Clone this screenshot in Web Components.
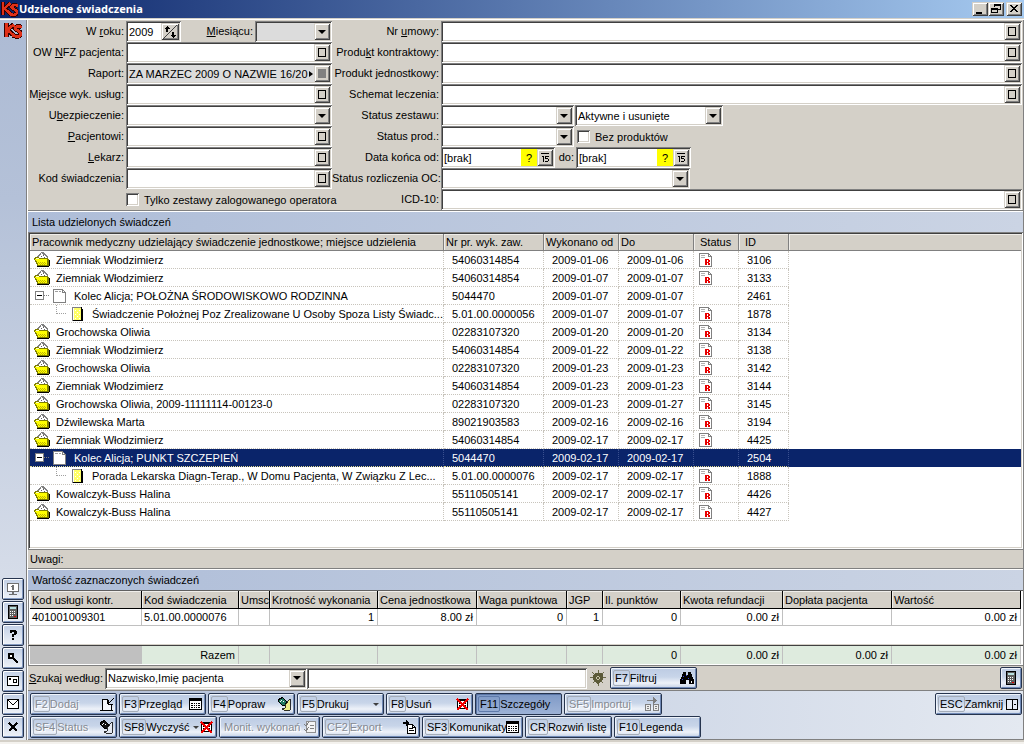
<!DOCTYPE html>
<html lang="pl">
<head>
<meta charset="utf-8">
<title>Udzielone świadczenia</title>
<style>
  html, body { margin: 0; height: 100%; }
  body { font: 11px/14px "Liberation Sans", Arial, sans-serif; color: #000; background: #d4d0c8; }
</style>
</head>
<body>
<ks-window></ks-window>

<script>
const ICONS = {
  logo: '<g fill="none" stroke="#300" stroke-width="4"><path d="M2 1V13M9 2L3 7L10 13M16 5C14 3 9 4 10 6S16 8 15 11 10 13 8 12"/></g><g fill="none" stroke="#e03018" stroke-width="2.4"><path d="M2 1V13M9 2L3 7L10 13M16 5C14 3 9 4 10 6S16 8 15 11 10 13 8 12"/></g>',
  min: '<path fill="#000" d="M4 11h6v2H4z"/>',
  restore: '<path fill="none" stroke="#000" d="M6.500 6V3.500h6v5H10M3.500 7.500h6v4h-6z"/><path fill="#000" d="M6 3h7v2H6zM3 7h7v2H3z"/>',
  close: '<path fill="#000" d="M4 4h2v1h1v1h2V5h1V4h2v1h-1v1h-1v1H9v1h1v1h1v1h1v1h-2v-1H9V9H7v1H6v1H4v-1h1V9h1V8h1V7H6V6H5V5H4z"/>',
  folder: '<path fill="#808080" d="M7 0h3v1h1v1h1v1h1v1h1v4H3V4h1V3h1V2h1V1h1z"/><path fill="#fff" d="M7 1h1v1h1v1h2v1h1v1h1v3H4V5h1V4h1V3h1z"/><path fill="#606060" d="M9 3h1v1H9zM7 4h1v1H7zM10 5h1v1h-1z"/><path fill="#808000" d="M1 5h4v1h9v1h1v7H3v-2H2v-2H1V8H0V6h1z"/><path fill="#ffff00" d="M1 7h12v6H4v-2H3V9H2V8H1z"/><path fill="#ffffc0" d="M2 6h3v1H2z"/><path fill="#c0b800" d="M4 10h1v1H4zM6 10h1v1H6zM8 10h1v1H8zM10 10h1v1h-1zM5 11h1v1H5zM7 11h1v1H7zM9 11h1v1H9zM11 11h1v1h-1zM6 12h1v1H6zM8 12h1v1H8zM10 12h1v1h-1z"/><path fill="#000" d="M3 14h12v1H3zM15 8h1v6h-1z"/>',
  page: '<path fill="#fff" stroke="#808080" d="M1.500 1.500h9l3 3v10h-12z"/><path fill="none" stroke="#808080" d="M10.500 1.500v3h3"/><path fill="#a0a0a0" d="M3 3h3v1H3zM7 3h2v1H7z"/>',
  note: '<path fill="#ffff66" stroke="#808080" d="M1.500 1.500h9v13h-9z"/><path fill="#fff" d="M2 2h1v12H2zM4 4h1v1H4zM6 6h1v1H6zM8 4h1v1H8zM4 8h1v1H4zM8 8h1v1H8zM6 10h1v1H6zM4 12h1v1H4zM8 12h1v1H8z"/><path fill="#000" d="M10 1h1v2h1v12H2v-1h8z"/>',
  report: '<path fill="#fff" stroke="#808080" d="M1.500 1.500h9l3 3v10h-12z"/><path fill="none" stroke="#808080" d="M10.500 1.500v3h3"/><path fill="#b0b0b0" d="M3 3h4v1H3zM3 5h4v1H3z"/><path fill="#e80000" fill-rule="evenodd" d="M7 7h4v1h1v2h-1v1h1v2h-2v-2H9v2H7zM9 8v2h1V8z"/>',
  monitor: '<path fill="#fff" stroke="#707070" d="M2.500 2.500h11v8h-11z"/><path fill="#707070" d="M7 4h2v5H7zM6 5h1v1H6zM7 11h2v2H7zM4 13h8v1H4z"/>',
  calc: '<path fill="#606060" stroke="#000" d="M3.500 1.500h9v13h-9z"/><path fill="#b8e0e0" d="M5 3h6v2H5z"/><path fill="#fff" d="M5 7h1v1H5zM7 7h1v1H7zM9 7h1v1H9zM5 9h1v1H5zM7 9h1v1H7zM9 9h1v1H9zM5 11h1v1H5zM7 11h1v1H7z"/><path fill="#e00000" d="M9 12h2v1H9z"/>',
  help: '<path fill="#000" d="M5 3h6v1h1v3h-1v1H9v2H7V7h2V5H7v1H5zM7 11h2v2H7z"/>',
  lens: '<path fill="none" stroke="#000" stroke-width="2" d="M4 4h4v4H4zM9 9l4 4"/><path fill="#fff" d="M5 5h2v2H5z"/>',
  card: '<path fill="#fff" stroke="#000" d="M2.500 3.500h11v9h-11z"/><path fill="#000" d="M4 5h2v2H4z"/><path fill="none" stroke="#000" d="M8.500 6.500h3v3h-3z"/>',
  mail: '<path fill="#fff" stroke="#000" d="M2.500 3.500h11v9h-11z"/><path fill="none" stroke="#000" d="M3 4l5 5 5-5"/>',
  cross: '<path fill="none" stroke="#000" stroke-width="2" d="M4 4l8 8M12 4l-8 8"/>',
  add: '<path fill="#f4f6fa" stroke="#000" d="M7 3.500H3.500v11h9V9"/><path fill="none" stroke="#000" d="M3 3.500h5.500v4M15 2l-5 5M9.500 4v4H14M1 14.500h13"/>',
  table: '<path fill="#fff" stroke="#000" d="M1.500 2.500h12v11h-12z"/><path fill="#000" d="M2 3h11v2H2zM3 7h2v1H3zM6 7h1v1H6zM8 7h1v1H8zM10 7h2v1h-2zM3 9h2v1H3zM6 9h1v1H6zM8 9h1v1H8zM10 9h2v1h-2zM3 11h2v1H3zM6 11h1v1H6zM8 11h1v1H8zM10 11h2v1h-2z"/>',
  edit: '<path fill="#207860" stroke="#000" d="M1.500 3.500l4-2 4 4-1 4-3 0-4-4z"/><path fill="#eeee88" stroke="#000" stroke-width=".8" d="M8 9l5-6v11l-4 1-4-2 3-1z"/><path fill="#fff" d="M4 4h1v1H4zM6 5h1v1H6zM3 5h1v1H3z"/>',
  status: '<path fill="#111" stroke="#000" d="M1.500 3.500l4-2 4 4-1 4-3 0-4-4z"/><path fill="#e4e8f0" stroke="#000" stroke-width=".8" d="M8 9l5-6v11l-4 1-4-2 3-1z"/><path fill="#fff" d="M4 4h1v1H4zM6 5h1v1H6zM3 5h1v1H3z"/>',
  del: '<path fill="#fff" stroke="#000" d="M2.500 3.500h10v9h-10z"/><path fill="#000" d="M3 4h9v1H3zM4 7h7v1H4zM4 9h7v1H4z"/><path fill="none" stroke="#f00000" stroke-width="1.500" d="M2 3l11 11M13 3L2 14"/>',
  check: '<path fill="#f4f4f4" stroke="#909090" d="M4.500 2.500h9v11h-9z"/><path fill="none" stroke="#808080" d="M2 5l2 2 3-4M2 10l2 2 3-4M8 6.500h4M8 9.500h4"/>',
  export: '<path fill="#fff" stroke="#000" d="M5.500 5.500h5l3 3v6h-8z"/><path fill="none" stroke="#000" d="M7 9.500h4M7 11.500h5M10.500 5.500v3h3"/><path fill="#000" d="M1 3h3V1l4 3-4 3V5H1z"/>',
  import: '<path fill="#eee" stroke="#808080" d="M1.500 8.500h5v6h-5zM9.500 8.500h5v6h-5z"/><path fill="none" stroke="#808080" d="M3 10.500h2M3 12.500h2M11 10.500h2M11 12.500h2M3 4.500h9M9.500 2v5"/><path fill="#808080" d="M9 1l4 3.500L9 8z"/>',
  exit: '<path fill="#e6ecf6" stroke="#000" d="M2.500 3.500h11v10h-11zM8.500 3v11"/><path fill="#000" d="M10 8h2v1h-2z"/>',
  binoculars: '<path fill="#000" d="M4 2h3v3h2V2h3l1 4 2 4v4h-5v-4H7v4H1v-4l2-4z"/><path fill="#3040e0" d="M4 6h1v1H4zM3 9h1v1H3zM9 8h1v1H9zM7 5h1v1H7z"/><path fill="#fff" d="M12 11h1v2h-1z"/>',
  gear: '<path fill="none" stroke="#6a6848" stroke-width="1" d="M8 0v16M0 7.500h16M2 2l11 11M14 2L3 13"/><path fill="#5c5a38" d="M5 3h6l2 2v5l-3 2-2 3-2-3-3-2V5z"/><path fill="#c8c4a8" d="M7 6h2v1h1v2H9v1H7V9H6V7h1z"/><path fill="#5c5a38" d="M7 7h2v2H7z"/>',
  sort: '<path stroke="#404040" d="M1 15L15 1"/><path fill="#000" d="M5 2l3 3H6v3H4V5H2zM11 14l3-3h-2V8h-2v3H8z"/>',
  day: '<path fill="#000" d="M4 3h8v1H4zM5 6h2v6H6V7H5zM8 6h4v1H9v1h2v1H8zM11 9h1v2h-1zM8 11h3v1H8z"/>'
};
const icon = (name, size = 16) =>
  `<svg width="${size}" height="${size}" viewBox="0 0 16 16" shape-rendering="crispEdges" aria-hidden="true">${ICONS[name]}</svg>`;

const BASE = `
  *, *::before, *::after { box-sizing: border-box; }
  svg { display: block; flex: none; }
  button, input, select { font: inherit; color: inherit; margin: 0; border-radius: 0; }
  .sunken { padding: 2px; background: #fff;
    box-shadow: inset 1px 1px #808080, inset -1px -1px #fff, inset 2px 2px #404040, inset -2px -2px #d4d0c8; }
  .raised { border: 0; padding: 0; background: #d4d0c8; display: flex; align-items: center; justify-content: center;
    box-shadow: inset 1px 1px #d4d0c8, inset -1px -1px #404040, inset 2px 2px #fff, inset -2px -2px #808080; }
`;

/* Registers an element whose open shadow root is filled from a template string. */
function define(tag, css, view) {
  customElements.define(tag, class extends HTMLElement {
    connectedCallback() {
      if (this.shadowRoot) return;
      const t = document.createElement('template');
      t.innerHTML = `<style>${BASE}${css}</style>${view(this)}`;
      this.attachShadow({ mode: 'open' }).append(t.content.cloneNode(true));
    }
  });
}
const attr = (el, name, fallback = '') => el.getAttribute(name) ?? fallback;

/* Window caption with its three system buttons */
define('ks-titlebar', `
  :host { display: flex; align-items: center; height: 18px; padding: 0 2px 0 1px; color: #fff;
    background: linear-gradient(to right, #0a246a, #a6caf0); }
  h1 { flex: 1; margin: 0 0 0 1px; font: bold 11px/16px "Noto Sans", sans-serif; }
  .raised { width: 16px; height: 14px; color: #000; }
  .raised:last-child { margin-left: 2px; }
`, () => `${icon('logo', 17)}<h1><slot></slot></h1>
  <button class="raised" aria-label="Minimalizuj">${icon('min')}</button>
  <button class="raised" aria-label="Przywróć">${icon('restore')}</button>
  <button class="raised" aria-label="Zamknij">${icon('close')}</button>`);

/* Vertical tool strip on the left */
define('ks-rail', `
  :host { display: flex; flex-direction: column; align-items: center; width: 26px; padding: 2px 0 1px;
    background: linear-gradient(to bottom, #adbbd4, #b4c1d8 25%, #d4dbe8 75%, #e4e9f1); }
  .gap { flex: 1; }
  button { width: 22px; height: 22px; margin-bottom: 1px; padding: 0; display: flex; align-items: center; justify-content: center;
    border: 1px solid #26344e; border-radius: 2px; background: linear-gradient(#c2d0e6, #eef2f8);
    box-shadow: inset 1px 1px #fff, inset -1px -1px #8299c0; }
`, () => `${icon('logo', 18)}<span class="gap"></span>` +
  [['monitor', 'Ekran'], ['calc', 'Kalkulator'], ['help', 'Pomoc'], ['lens', 'Szukaj'], ['card', 'Karta'], ['mail', 'Wiadomości'], ['cross', 'Zamknij']]
    .map(([i, l]) => `<button aria-label="${l}">${icon(i)}</button>`).join(''));

/* Sunken box: text field, lookup field, date field, spinner or drop-down */
function control(el) {
  const type = attr(el, 'type', 'lookup'), value = attr(el, 'value'), off = el.hasAttribute('inactive') ? ' off' : '';
  const name = el.hasAttribute('tip') ? ` aria-label="${attr(el, 'tip')}"` : '';
  if (type === 'select')
    return `<div class="box sunken${off}"><select id="c"${name}><option>${value}</option></select><span class="raised arrow"><i></i></span></div>`;
  const input = `<input id="c" type="text" value="${value}"${name}>`;
  if (type === 'date')
    return `<div class="box sunken">${input}<button class="ask" aria-label="Wybierz">?</button><button class="raised" aria-label="Kalendarz">${icon('day')}</button></div>`;
  if (type === 'spin')
    return `<div class="box sunken">${input}<button class="raised wide" aria-label="Zmień rok">${icon('sort')}</button></div>`;
  if (type === 'text') return `<div class="box sunken">${input}</div>`;
  return `<div class="box sunken${off}">${input}${off ? '<span class="more"></span>' : ''}<button class="raised" aria-label="Wybierz z listy"><b></b></button></div>`;
}
define('ks-field', `
  :host { display: flex; align-items: stretch; height: 21px; min-width: 0; }
  label { width: var(--label, auto); flex: none; padding-right: 2px; text-align: right; line-height: 20px; white-space: nowrap; }
  .box { flex: 1; min-width: 0; display: flex; }
  .off { background: #dcdcdc; }
  input, select { flex: 1; width: 0; min-width: 0; border: 0; padding: 0 1px; background: transparent; appearance: none; outline: 0; }
  .box:has(select) { display: grid; grid-template-columns: 1fr 16px; }
  select { width: 100%; grid-area: 1 / 1 / 2 / 3; padding-right: 18px; }
  .arrow { grid-area: 1 / 2; pointer-events: none; }
  .arrow i { border: 4px solid transparent; border-top-color: #000; border-bottom: 0; }
  .raised { width: 16px; flex: none; }
  .wide { width: 18px; }
  .raised b { width: 8px; height: 9px; border: 1px solid #000; }
  .off .raised b { border: 0; background: #808080; }
  .more { align-self: center; margin-right: 1px; border: 3px solid transparent; border-left: 4px solid #000; border-right: 0; }
  .ask { width: 16px; flex: none; border: 0; padding: 0; background: #ff0; }
`, el => (el.hasAttribute('tip') ? '' : '<label for="c"><slot></slot></label>') + control(el));

define('ks-check', `
  :host { display: flex; align-items: center; height: 21px; }
  label { display: flex; align-items: center; gap: 5px; white-space: nowrap; }
  input { appearance: none; width: 13px; height: 13px; background: #fff;
    box-shadow: inset 1px 1px #808080, inset -1px -1px #fff, inset 2px 2px #404040, inset -2px -2px #d4d0c8; }
`, () => `<label><input type="checkbox"><slot></slot></label>`);

/* Search criteria above the list */
define('ks-filters', `
  :host { display: grid; grid-template-columns: 304px 1fr; padding: 1px 1px 0 0; border-bottom: 1px solid #808080; }
  .col { display: flex; flex-direction: column; min-width: 0; }
  .left { --label: 98px; }
  .right { --label: 109px; }
  .row { display: flex; gap: 1px; }
  .year { width: 153px; }
  .month { flex: 1; --label: 73px; }
  .w1 { width: 242px; }
  .w2 { width: 148px; }
  .w3 { width: 223px; }
  .w4 { width: 358px; }
  .to { width: 135px; --label: 20px; }
  .in { margin-left: 98px; }
  .no { margin-left: 2px; }
`, () => `
  <div class="col left">
    <div class="row"><ks-field class="year" type="spin" value="2009">W <u>r</u>oku:</ks-field><ks-field class="month" type="select" inactive><u>M</u>iesiącu:</ks-field></div>
    <ks-field>OW <u>N</u>FZ pacjenta:</ks-field>
    <ks-field inactive value="ZA MARZEC 2009 O NAZWIE 16/20">Raport:</ks-field>
    <ks-field>M<u>i</u>ejsce wyk. usług:</ks-field>
    <ks-field type="select">U<u>b</u>ezpieczenie:</ks-field>
    <ks-field><u>P</u>acjentowi:</ks-field>
    <ks-field><u>L</u>ekarz:</ks-field>
    <ks-field>Kod świadczenia:</ks-field>
    <ks-check class="in">Tylko zestawy zalogowanego operatora</ks-check>
  </div>
  <div class="col right">
    <ks-field>Nr <u>u</u>mowy:</ks-field>
    <ks-field>Produ<u>k</u>t kontraktowy:</ks-field>
    <ks-field>Produkt jednostkowy:</ks-field>
    <ks-field>Schemat leczenia:</ks-field>
    <div class="row"><ks-field class="w1" type="select">Status zestawu:</ks-field><ks-field class="w2" type="select" value="Aktywne i usunięte" tip="Zakres zestawów"></ks-field></div>
    <div class="row"><ks-field class="w1" type="select">Status prod.:</ks-field><ks-check class="no">Bez produktów</ks-check></div>
    <div class="row"><ks-field class="w3" type="date" value="[brak]">Data końca od:</ks-field><ks-field class="to" type="date" value="[brak]">do:</ks-field></div>
    <ks-field class="w4" type="select">Status rozliczenia OC:</ks-field>
    <ks-field>ICD-10:</ks-field>
  </div>`);

/* Blue caption strip above each table */
define('ks-band', `
  :host { display: block; background: linear-gradient(to right, #aebdd8, #cbd4e4); border-top: 1px solid #fff; }
  h2 { margin: 0; padding: 0 4px; font: inherit; line-height: 20px; }
`, () => `<h2><slot></slot></h2>`);

const Z = 'Ziemniak Włodzimierz', G = 'Grochowska Oliwia', KB = 'Kowalczyk-Buss Halina';
const ROWS = [
  [0, Z, '54060314854', '2009-01-06', '2009-01-06', 1, '3106'],
  [0, Z, '54060314854', '2009-01-07', '2009-01-07', 1, '3133'],
  [1, 'Kolec Alicja; POŁOŻNA ŚRODOWISKOWO RODZINNA', '5044470', '2009-01-07', '2009-01-07', 0, '2461'],
  [2, 'Świadczenie Położnej Poz Zrealizowane U Osoby Spoza Listy Świadc...', '5.01.00.0000056', '2009-01-07', '2009-01-07', 1, '1878'],
  [0, G, '02283107320', '2009-01-20', '2009-01-20', 1, '3134'],
  [0, Z, '54060314854', '2009-01-22', '2009-01-22', 1, '3138'],
  [0, G, '02283107320', '2009-01-23', '2009-01-23', 1, '3142'],
  [0, Z, '54060314854', '2009-01-23', '2009-01-23', 1, '3144'],
  [0, G + ', 2009-11111114-00123-0', '02283107320', '2009-01-23', '2009-01-27', 1, '3145'],
  [0, 'Dźwilewska Marta', '89021903583', '2009-02-16', '2009-02-16', 1, '3194'],
  [0, Z, '54060314854', '2009-02-17', '2009-02-17', 1, '4425'],
  [1, 'Kolec Alicja; PUNKT SZCZEPIEŃ', '5044470', '2009-02-17', '2009-02-17', 0, '2504', true],
  [2, 'Porada Lekarska Diagn-Terap., W Domu Pacjenta, W Związku Z Lec...', '5.01.00.0000076', '2009-02-17', '2009-02-17', 1, '1888'],
  [0, KB, '55110505141', '2009-02-17', '2009-02-17', 1, '4426'],
  [0, KB, '55110505141', '2009-02-17', '2009-02-17', 1, '4427']
];
const lead = [
  icon('folder'),
  `<span class="exp"></span><span class="dash"></span>${icon('page')}`,
  `<span class="elbow"></span>${icon('note')}`
];

define('ks-services', `
  :host { display: flex; flex: 1; min-height: 0; }
  .sunken { flex: 1; min-width: 0; }
  table { width: 100%; table-layout: fixed; border-spacing: 0; }
  .c1 { width: 414px; } .c2 { width: 100px; } .c3, .c4 { width: 75px; } .c5 { width: 45px; } .c6 { width: 50px; }
  th { height: 17px; padding: 0 0 0 2px; text-align: left; font-weight: normal; line-height: 15px; background: #d4d0c8; white-space: nowrap;
    border-right: 1px solid #808080; border-bottom: 1px solid #808080; box-shadow: inset 1px 1px #f0eeea; }
  th:nth-child(5), th:nth-child(6) { padding-left: 6px; }
  th:last-child, td:last-child { border-right: 0; }
  td { height: 18px; padding: 0 0 0 8px; line-height: 14px; white-space: nowrap; overflow: hidden;
    border-right: 1px dotted #c8c4bc; border-bottom: 1px dotted #c8c4bc; }
  td:last-child { border-bottom: 0; }
  td:nth-child(5), td:first-child { padding-left: 4px; }
  .name { display: flex; align-items: center; gap: 6px; height: 17px; }
  .name span { flex: none; }
  .l1, .l2 { gap: 0; }
  .l1 svg { margin-right: 6px; }
  .l2 svg { margin-right: 5px; }
  .exp { width: 9px; height: 9px; margin-left: 1px; border: 1px solid #808080;
    background: linear-gradient(#000, #000) center / 5px 1px no-repeat #fff; }
  .dash { width: 5px; margin-right: 3px; border-top: 1px dotted #808080; }
  .elbow { width: 10px; height: 9px; margin: 0 5px 8px 22px; border: dotted #a0a0a0; border-width: 0 0 1px 1px; }
  .sel td { background: #0a246a; color: #fff; border-bottom-color: #e0d890; border-right-color: #3a5090; }
`, () => `<div class="sunken"><table>
  <colgroup><col class="c1"><col class="c2"><col class="c3"><col class="c4"><col class="c5"><col class="c6"><col></colgroup>
  <thead><tr><th>Pracownik medyczny udzielający świadczenie jednostkowe; miejsce udzielenia</th><th>Nr pr. wyk. zaw.</th><th>Wykonano od</th><th>Do</th><th>Status</th><th>ID</th><th></th></tr></thead>
  <tbody>${ROWS.map(([lvl, name, nr, from, to, st, id, sel]) => `<tr${sel ? ' class="sel"' : ''}>
    <td><div class="name l${lvl}">${lead[lvl]}<span>${name}</span></div></td><td>${nr}</td><td>${from}</td><td>${to}</td>
    <td>${st ? icon('report') : ''}</td><td>${id}</td><td></td></tr>`).join('')}</tbody>
  </table></div>`);

define('ks-note', `
  :host { display: block; padding-left: 2px; line-height: 18px; border: solid #808080; border-width: 1px 0; }
`, () => `<slot></slot>`);

/* Value breakdown of the selected service, with the totals strip below */
const WIDTHS = [112, 97, 31, 108, 99, 90, 36, 78, 102, 109];
const cols = `<colgroup>${WIDTHS.map(w => `<col style="width:${w}px">`).join('')}<col></colgroup>`;
define('ks-values', `
  :host { display: block; }
  .rows, .sum { padding: 0 2px 0 1px; background: #fff; border-left: 1px solid #808080; }
  .rows { height: 55px; border-top: 1px solid #606060; border-bottom: 1px solid #d4d0c8; }
  .sum { height: 20px; border-top: 1px solid #404040; }
  table { width: 100%; table-layout: fixed; border-spacing: 0; }
  th, td { padding: 0 3px 0 2px; white-space: nowrap; overflow: hidden; line-height: 16px; height: 18px; border-right: 1px solid #c0c0c0; }
  th { text-align: left; font-weight: normal; background: #d4d0c8; border-right-color: #000; border-bottom: 1px solid #000; box-shadow: inset 1px 1px #f0eeea; }
  tbody td { height: 17px; border-bottom: 1px solid #c0c0c0; }
  td { text-align: right; }
  tbody td:nth-child(-n+2) { text-align: left; }
  .sum td { background: #deebde; height: 18px; border-bottom: 0; }
  .sum td:first-child { background: #c0c0c0; }
  .sum td:nth-child(2) { text-align: right; }
`, () => `
  <div class="rows"><table>${cols}
    <thead><tr>${['Kod usługi kontr.', 'Kod świadczenia', 'Umsc', 'Krotność wykonania', 'Cena jednostkowa', 'Waga punktowa', 'JGP', 'Il. punktów', 'Kwota refundacji', 'Dopłata pacjenta', 'Wartość'].map(t => `<th>${t}</th>`).join('')}</tr></thead>
    <tbody><tr>${['401001009301', '5.01.00.0000076', '', '1', '8.00 zł', '0', '1', '0', '0.00 zł', '', '0.00 zł'].map(t => `<td>${t}</td>`).join('')}</tr></tbody>
  </table></div>
  <div class="sum"><table>${cols}
    <tbody><tr>${['', 'Razem', '', '', '', '', '', '0', '0.00 zł', '0.00 zł', '0.00 zł'].map(t => `<td>${t}</td>`).join('')}</tr></tbody>
  </table></div>`);

/* Command button: shortcut key, caption and icon */
define('ks-command', `
  :host { display: block; width: 87px; flex: none; }
  :host([size="icon"]) { width: 22px; }
  :host([size="m"]) { width: 98px; }
  :host([size="l"]) { width: 101px; }
  button { display: flex; align-items: center; width: 100%; height: 22px; padding: 0 1px 0 2px; white-space: nowrap; text-align: left;
    border: 1px solid #26344e; border-radius: 2px; background: linear-gradient(#bccbe3, #c8d5e9 45%, #eef2f9 75%, #c4d1e6);
    box-shadow: inset 1px 1px #eef3fa, inset -1px -1px #6f88b4; }
  :host([size="icon"]) button { padding: 0; justify-content: center; }
  kbd { font: inherit; line-height: 14px; padding: 0 1px; border: 1px solid #a4acb8; border-radius: 2px; }
  span { flex: 1; min-width: 0; }
  button > span:first-child { padding-left: 2px; }
  button:disabled { color: #868a92; text-shadow: 1px 1px #fff; }
  .on { background: linear-gradient(#7e99c6, #9db2d6); box-shadow: inset 1px 1px #5a75a6; }
  .on kbd { border-color: #5f7aaa; }
  .drop { border: 3px solid transparent; border-top-color: #404040; border-bottom: 0; }
  .drop:last-child { margin-right: 3px; }
`, el => `<button${el.hasAttribute('off') ? ' disabled' : ''}${el.hasAttribute('on') ? ' class="on" aria-pressed="true"' : ''}${el.hasAttribute('tip') ? ` aria-label="${attr(el, 'tip')}"` : ''}>` +
  `${el.hasAttribute('key') ? `<kbd>${attr(el, 'key')}</kbd>` : ''}${attr(el, 'size') === 'icon' ? '' : '<span><slot></slot></span>'}` +
  `${el.hasAttribute('menu') ? '<i class="drop"></i>' : ''}${el.hasAttribute('icon') ? icon(attr(el, 'icon')) : ''}</button>`);

define('ks-search', `
  :host { display: flex; align-items: center; height: 26px; padding: 0 1px 0 0; border: solid #808080; border-width: 1px 0; }
  .by { width: 279px; --label: 77px; }
  .text { flex: 1; max-width: 280px; }
  .mark { padding: 0 4px 0 3px; }
  .end { margin-left: auto; }
`, () => `
  <ks-field class="by" type="select" value="Nazwisko,Imię pacjenta"><u>S</u>zukaj według:</ks-field>
  <ks-field class="text" type="text" tip="Szukany tekst"></ks-field>
  <span class="mark">${icon('gear')}</span>
  <ks-command key="F7" icon="binoculars">Filtruj</ks-command>
  <ks-command class="end" size="icon" icon="calc" tip="Kalkulator"></ks-command>`);

define('ks-toolbar', `
  :host { display: flex; flex-direction: column; gap: 1px; padding: 2px 1px 1px 2px; border-bottom: 1px solid #808080;
    background: linear-gradient(to right, #b0bed8, #e4e9f1); }
  div { display: flex; gap: 2px; }
  .end { margin-left: auto; }
`, () => `
  <div>
    <ks-command key="F2" icon="add" off>Dodaj</ks-command><ks-command key="F3" icon="table">Przegląd</ks-command>
    <ks-command key="F4" icon="edit">Popraw</ks-command><ks-command key="F5" menu>Drukuj</ks-command>
    <ks-command key="F8" icon="del">Usuń</ks-command><ks-command key="F11" on>Szczegóły</ks-command>
    <ks-command key="SF5" icon="import" size="m" off>Importuj</ks-command><ks-command class="end" key="ESC" icon="exit">Zamknij</ks-command>
  </div>
  <div>
    <ks-command key="SF4" icon="status" off>Status</ks-command><ks-command key="SF8" icon="del" size="m" menu>Wyczyść</ks-command>
    <ks-command icon="check" size="l" off>Monit. wykonań</ks-command><ks-command key="CF2" icon="export" size="m" off>Export</ks-command>
    <ks-command key="SF3" icon="table" size="l">Komunikaty</ks-command><ks-command key="CR">Rozwiń listę</ks-command>
    <ks-command key="F10">Legenda</ks-command>
  </div>`);

define('ks-window', `
  :host { display: flex; flex-direction: column; min-height: 100vh; }
  .body { flex: 1; display: flex; margin-top: 1px; border-top: 1px solid #fff; }
  main { flex: 1; min-width: 0; display: flex; flex-direction: column; padding-left: 1px;
    border: solid #808080; border-width: 0 1px; box-shadow: inset 1px 0 #fff; }
  footer { height: 4px; border-bottom: 2px solid #f4f2ee; }
`, () => `
  <ks-titlebar>Udzielone świadczenia</ks-titlebar>
  <div class="body">
    <ks-rail></ks-rail>
    <main>
      <ks-filters></ks-filters>
      <ks-band>Lista udzielonych świadczeń</ks-band>
      <ks-services></ks-services>
      <ks-note>Uwagi:</ks-note>
      <ks-band>Wartość zaznaczonych świadczeń</ks-band>
      <ks-values></ks-values>
      <ks-search></ks-search>
      <ks-toolbar></ks-toolbar>
    </main>
  </div>
  <footer></footer>`);
</script>
</body>
</html>
